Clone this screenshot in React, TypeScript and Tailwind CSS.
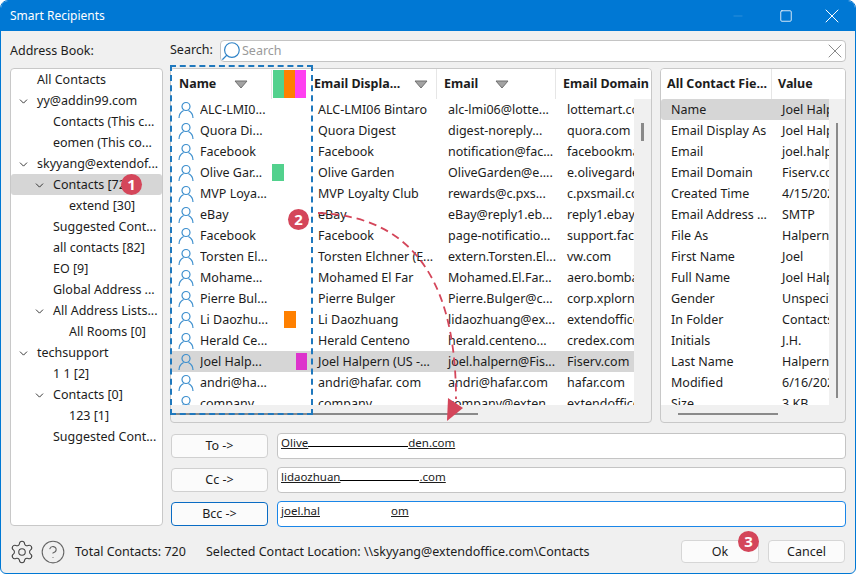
import React from 'react';
import { CircleHelp, Minus, Square, X, Search, ChevronDown, Settings } from 'lucide-react';

interface TreeItem {
  label: string;
  depth: number;
  arrow?: boolean;
  selected?: boolean;
}

const treeItems: TreeItem[] = [
  { label: 'All Contacts', depth: 0 },
  { label: 'yy@addin99.com', depth: 0, arrow: true },
  { label: 'Contacts (This c...', depth: 1 },
  { label: 'eomen (This co...', depth: 1 },
  { label: 'skyyang@extendof...', depth: 0, arrow: true },
  { label: 'Contacts [720]', depth: 1, arrow: true, selected: true },
  { label: 'extend [30]', depth: 2 },
  { label: 'Suggested Cont...', depth: 1 },
  { label: 'all contacts [82]', depth: 1 },
  { label: 'EO [9]', depth: 1 },
  { label: 'Global Address ...', depth: 1 },
  { label: 'All Address Lists...', depth: 1, arrow: true },
  { label: 'All Rooms [0]', depth: 2 },
  { label: 'techsupport', depth: 0, arrow: true },
  { label: '1 1 [2]', depth: 1 },
  { label: 'Contacts [0]', depth: 1, arrow: true },
  { label: '123 [1]', depth: 2 },
  { label: 'Suggested Cont...', depth: 1 },
];

const contacts = [
  ['ALC-LMI0...', 'ALC-LMI06 Bintaro', 'alc-lmi06@lotte...', 'lottemart.com', ''],
  ['Quora Di...', 'Quora Digest', 'digest-noreply...', 'quora.com', ''],
  ['Facebook', 'Facebook', 'notification@fac...', 'facebookmail.com', ''],
  ['Olive Gar...', 'Olive Garden', 'OliveGarden@e....', 'e.olivegarden.com', 'green'],
  ['MVP Loya...', 'MVP Loyalty Club', 'rewards@c.pxs...', 'c.pxsmail.com', ''],
  ['eBay', 'eBay', 'eBay@reply1.eb...', 'reply1.ebay.com', ''],
  ['Facebook', 'Facebook', 'page-notificatio...', 'support.facebook', ''],
  ['Torsten El...', 'Torsten Elchner (E...', 'extern.Torsten.El...', 'vw.com', ''],
  ['Mohame...', 'Mohamed El Far', 'Mohamed.El.Far...', 'aero.bombardier', ''],
  ['Pierre Bul...', 'Pierre Bulger', 'Pierre.Bulger@c...', 'corp.xplornet', ''],
  ['Li Daozhu...', 'Li Daozhuang', 'lidaozhuang@ex...', 'extendoffice.com', 'orange'],
  ['Herald Ce...', 'Herald Centeno', 'herald.centeno...', 'credex.com', ''],
  ['Joel Halp...', 'Joel Halpern (US -...', 'joel.halpern@Fis...', 'Fiserv.com', 'magenta'],
  ['andri@ha...', 'andri@hafar. com', 'andri@hafar.com', 'hafar.com', ''],
  ['company', 'company', 'company@exten...', 'extendoffice.com', ''],
];

const fields = [
  ['Name', 'Joel Halpern'],
  ['Email Display As', 'Joel Halpern'],
  ['Email', 'joel.halpern'],
  ['Email Domain', 'Fiserv.com'],
  ['Created Time', '4/15/2021'],
  ['Email Address ...', 'SMTP'],
  ['File As', 'Halpern, Joel'],
  ['First Name', 'Joel'],
  ['Full Name', 'Joel Halpern'],
  ['Gender', 'Unspecified'],
  ['In Folder', 'Contacts'],
  ['Initials', 'J.H.'],
  ['Last Name', 'Halpern'],
  ['Modified', '6/16/2021'],
  ['Size', '3 KB'],
];

const FilterMark = () => (
  <svg width="14" height="9" viewBox="0 0 14 9" className="shrink-0">
    <path d="M1 1h12L7 8z" fill="#a3a3a3" stroke="#6f6f6f" strokeWidth="1" />
  </svg>
);

const PersonIcon = () => (
  <svg width="16" height="18" viewBox="0 0 16 18" fill="none" stroke="#3d8fce" strokeWidth="1.2" className="shrink-0">
    <circle cx="8" cy="5.5" r="4" />
    <path d="M1 17c0-4 3-6.5 4.6-7.4M15 17c0-4-3-6.5-4.6-7.4" />
  </svg>
);

const Badge = ({ n, className }: { n: number; className: string }) => (
  <div
    className={`absolute w-[21px] h-[21px] rounded-full bg-[#d4465a] text-white font-bold text-[15px] leading-[21px] text-center ${className}`}
  >
    {n}
  </div>
);

const SendButton = ({ label, active }: { label: string; active?: boolean }) => (
  <button
    className={`w-[97px] h-[24px] rounded-[4px] border bg-[#fbfbfb] text-[12.5px] leading-none ${
      active ? 'border-[#0a6cc4]' : 'border-[#d0d0d0]'
    }`}
  >
    {label}
  </button>
);

const RecipientBox = ({ active, children }: { active?: boolean; children: React.ReactNode }) => (
  <div
    className={`flex-1 h-[26px] rounded-[4px] bg-white border pl-[3px] text-[11.5px] leading-[18px] ${
      active ? 'border-[#1a86e8]' : 'border-[#c4c4c4]'
    }`}
  >
    {children}
  </div>
);

export default function App() {
  return (
    <div className="relative w-[856px] h-[574px] flex flex-col overflow-hidden rounded-t-lg rounded-b-md border border-[#0078d4] bg-[#f0f0f0] text-[#1c1c1c] text-[12.5px] font-['Noto_Sans',sans-serif]">
      {/* title bar */}
      <div className="h-[30px] shrink-0 flex items-center bg-[#0078d4] text-white">
        <span className="ml-[9px] text-[12px]">Smart Recipients</span>
        <div className="ml-auto flex items-center">
          <Minus size={14} strokeWidth={1} className="mr-[34px] text-[#4a9fe0]" />
          <Square size={14} strokeWidth={1.4} className="mr-[27px]" />
          <X size={24} strokeWidth={1} className="mr-[11px]" />
        </div>
      </div>

      <div className="flex-1 flex pt-[9px]">
        {/* address book */}
        <div className="ml-[9px] w-[153px] shrink-0 flex flex-col">
          <div className="h-[28px] leading-[21px]">Address Book:</div>
          <div className="h-[458px] rounded-[4px] border border-[#c8c8c8] bg-white overflow-hidden">
            {treeItems.map((item, i) => (
              <div
                key={i}
                className={`h-[21px] flex items-center whitespace-nowrap rounded-[3px] pt-[2px] ${item.selected ? 'bg-[#d6d6d6]' : ''} ${
                  item.depth === 0 ? 'pl-[26px]' : item.depth === 1 ? 'pl-[42px]' : 'pl-[58px]'
                } relative`}
              >
                {item.arrow && (
                  <ChevronDown
                    size={13}
                    strokeWidth={1.6}
                    className={`absolute ${item.depth === 0 ? 'left-[6px]' : 'left-[22px]'}`}
                  />
                )}
                {item.label}
              </div>
            ))}
          </div>
        </div>

        {/* right side */}
        <div className="ml-[7px] w-[676px] flex flex-col">
          <div className="h-[21px] flex items-center">
            <span className="w-[50px]">Search:</span>
            <div className="flex-1 h-[22px] flex items-center rounded-[4px] border border-[#c4c4c4] bg-white">
              <Search size={22} strokeWidth={1.3} className="-ml-[1px] text-[#2f83c7] -scale-x-100" />
              <span className="pt-[2px] text-[#9a9a9a]">Search</span>
              <X size={24} strokeWidth={1} className="ml-auto -mr-[2px] text-[#8a8a8a]" />
            </div>
          </div>

          <div className="mt-[7px] flex gap-[8px]">
            {/* contact list */}
            <div className="w-[482px] h-[355px] rounded-[4px] border border-[#c8c8c8] bg-[#f0f0f0] overflow-hidden">
              <div className="h-[30px] flex bg-white font-bold">
                <div className="w-[142px] flex items-center">
                  <span className="ml-[8px] w-[55px]">Name</span>
                  <FilterMark />
                  <div className="ml-[23px] h-[29px] w-[1px] bg-[#e6e6e6]" />
                  <div className="ml-[1px] w-[11px] h-[28px] bg-[#52d18d]" />
                  <div className="w-[11px] h-[28px] bg-[#ff8000]" />
                  <div className="w-[11px] h-[28px] bg-[#ff40f0]" />
                </div>
                <div className="w-[124px] flex items-center border-r border-[#e6e6e6]">
                  <span className="ml-[1px] w-[100px] whitespace-nowrap">Email Displa...</span>
                  <FilterMark />
                </div>
                <div className="w-[119px] flex items-center border-r border-[#e6e6e6]">
                  <span className="ml-[7px] w-[51px]">Email</span>
                  <FilterMark />
                </div>
                <div className="flex-1 flex items-center whitespace-nowrap overflow-hidden">
                  <span className="ml-[7px]">Email Domain</span>
                </div>
              </div>

              <div className="h-[306px] flex">
                <div className="w-[463px] overflow-hidden bg-white">
                  {contacts.map((c, i) => (
                    <div
                      key={i}
                      className={`h-[21px] flex items-center whitespace-nowrap ${i === 12 ? 'bg-[#d6d6d6]' : ''}`}
                    >
                      <div className="w-[142px] h-full flex items-center pl-[7px] shrink-0">
                        <PersonIcon />
                        <span className="ml-[6px] pt-[2px] w-[72px] overflow-hidden shrink-0">{c[0]}</span>
                        <div className={`w-[12px] h-[17px] ${c[4] === 'green' ? 'bg-[#52d18d]' : ''}`} />
                        <div className={`w-[12px] h-[17px] ${c[4] === 'orange' ? 'bg-[#ff8000]' : ''}`} />
                        <div className={`w-[11px] h-[17px] ${c[4] === 'magenta' ? 'bg-[#dd33cc]' : ''}`} />
                      </div>
                      <div className="w-[124px] pl-[5px] pt-[2px] overflow-hidden shrink-0">{c[1]}</div>
                      <div className="w-[119px] pl-[11px] pt-[2px] overflow-hidden shrink-0">{c[2]}</div>
                      <div className="w-[78px] pl-[11px] pt-[2px] overflow-hidden shrink-0">{c[3]}</div>
                    </div>
                  ))}
                </div>
                <div className="flex-1 flex justify-center">
                  <div className="mt-[24px] w-[3px] h-[18px] bg-[#8a8a8a]" />
                </div>
              </div>
              <div className="h-[18px] pt-[8px]">
                <div className="w-[307px] h-[2px] bg-[#8a8a8a]" />
              </div>
            </div>

            {/* contact fields */}
            <div className="w-[186px] h-[355px] rounded-[4px] border border-[#c8c8c8] bg-[#f0f0f0] overflow-hidden">
              <div className="h-[30px] flex items-center bg-white font-bold whitespace-nowrap">
                <div className="w-[111px] h-full flex items-center pl-[6px] border-r border-[#e6e6e6]">All Contact Fie...</div>
                <span className="ml-[6px]">Value</span>
              </div>
              <div className="h-[306px] flex">
                <div className="w-[168px] overflow-hidden bg-white">
                  {fields.map((f, i) => (
                    <div
                      key={i}
                      className={`h-[21px] flex items-center pt-[2px] whitespace-nowrap ${i === 0 ? 'bg-[#d6d6d6] rounded-l-[3px]' : ''}`}
                    >
                      <div className="w-[111px] pl-[10px] shrink-0">{f[0]}</div>
                      <div className="pl-[10px]">{f[1]}</div>
                    </div>
                  ))}
                </div>
                <div className="flex-1 flex justify-center">
                  <div className="mt-[24px] w-[2px] h-[275px] bg-[#8a8a8a]" />
                </div>
              </div>
              <div className="h-[18px] pt-[8px] pl-[17px]">
                <div className="w-[100px] h-[2px] bg-[#8a8a8a]" />
              </div>
            </div>
          </div>

          {/* recipients */}
          <div className="mt-[10px] flex flex-col gap-[8px]">
            <div className="flex items-center">
              <div className="ml-[1px] mr-[9px]">
                <SendButton label="To ->" />
              </div>
              <RecipientBox>
                <span className="underline">Olive</span>
                <span className="inline-block w-[100px] h-[13px] border-b border-black align-baseline" />
                <span className="underline">den.com</span>
              </RecipientBox>
            </div>
            <div className="flex items-center">
              <div className="ml-[1px] mr-[9px]">
                <SendButton label="Cc ->" />
              </div>
              <RecipientBox>
                <span className="underline">lidaozhuan</span>
                <span className="inline-block w-[79px] h-[13px] border-b border-black align-baseline" />
                <span className="underline">.com</span>
              </RecipientBox>
            </div>
            <div className="flex items-center">
              <div className="ml-[1px] mr-[9px]">
                <SendButton label="Bcc ->" active />
              </div>
              <RecipientBox active>
                <span className="underline">joel.hal</span>
                <span className="inline-block w-[71px]" />
                <span className="underline">om</span>
              </RecipientBox>
            </div>
          </div>
        </div>
      </div>

      {/* footer */}
      <div className="h-[46px] shrink-0 flex items-center pt-[3px]">
        <Settings size={26} strokeWidth={1} className="ml-[8px] text-[#444]" />
        <CircleHelp size={26} strokeWidth={1} className="ml-[5px] text-[#666]" />
        <span className="ml-[9px] pt-[2px] w-[131px]">Total Contacts: 720</span>
        <span className="pt-[2px] whitespace-nowrap">Selected Contact Location: \\skyyang@extendoffice.com\Contacts</span>
        <div className="ml-auto flex gap-[9px] mr-[10px]">
          <button className="w-[78px] h-[23px] rounded-[4px] border border-[#d6d6d6] bg-[#fbfbfb] pt-[1px]">Ok</button>
          <button className="w-[77px] h-[23px] rounded-[4px] border border-[#d6d6d6] bg-[#fbfbfb] pt-[1px]">Cancel</button>
        </div>
      </div>

      {/* annotations on top of the dialog */}
      <div className="absolute left-[169px] top-[64px] w-[143px] h-[350px] border-2 border-dashed border-[#1f78bd] pointer-events-none" />
      <svg className="absolute left-0 top-0 pointer-events-none" width="856" height="574" fill="none">
        <path d="M317 212C399 215 455 264 455 398" stroke="#d4465a" strokeWidth="1.8" strokeDasharray="8 5" />
        <path d="M446 420L447 397L462 407z" fill="#d4465a" />
      </svg>
      <Badge n={1} className="left-[120px] top-[173px]" />
      <Badge n={2} className="left-[287px] top-[208px]" />
      <Badge n={3} className="left-[737px] top-[530px]" />
    </div>
  );
}
